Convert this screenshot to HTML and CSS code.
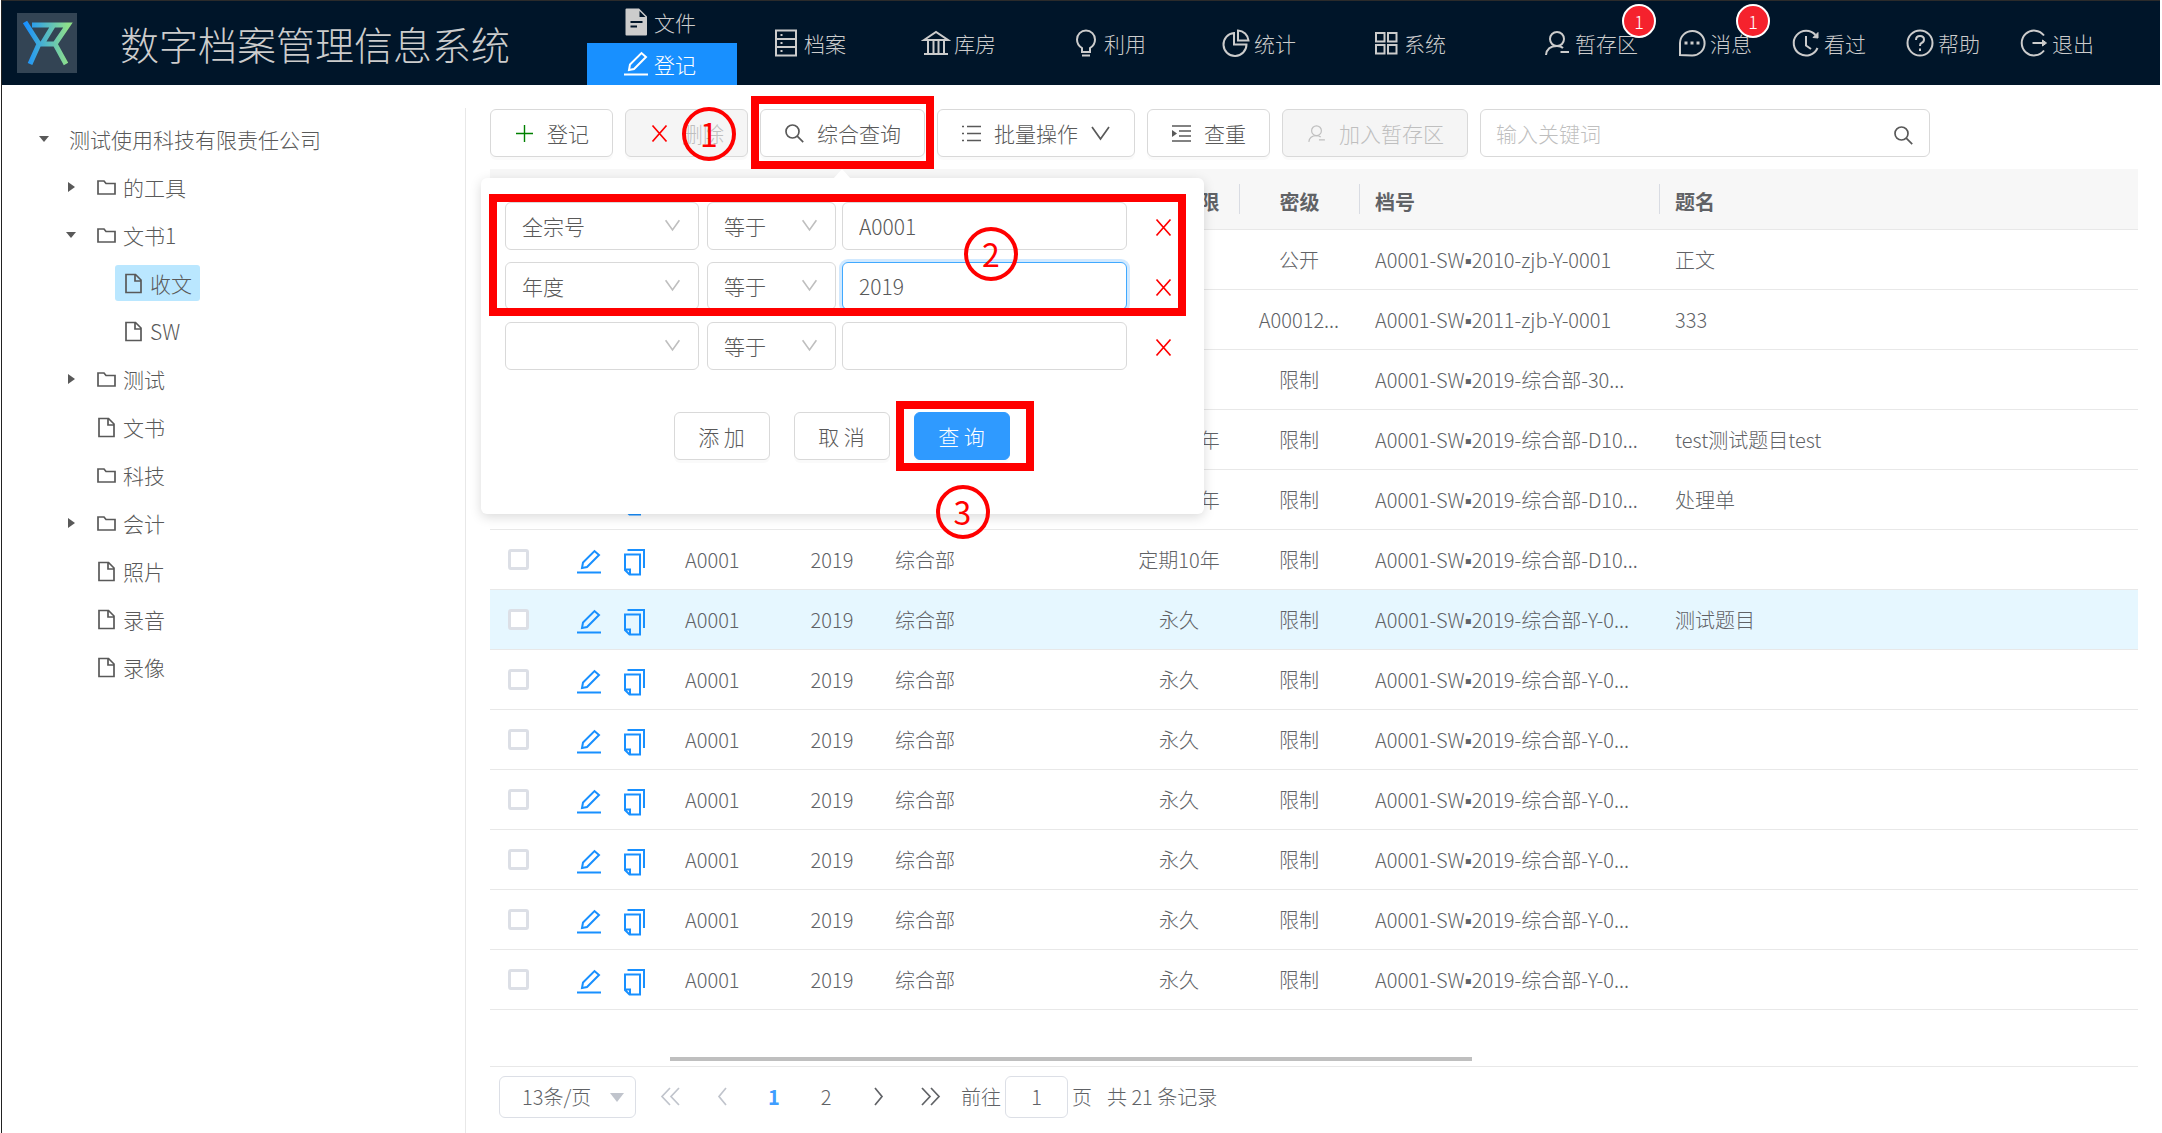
FILE: index.html
```html
<!DOCTYPE html>
<html lang="zh-CN">
<head>
<meta charset="utf-8">
<title>数字档案管理信息系统</title>
<link rel="stylesheet" href="styles.css">
</head>
<body>
<svg class="sprite" aria-hidden="true">
  <defs>
    <linearGradient id="brand" x1="0" y1="0" x2="1" y2="0"><stop offset="0" stop-color="#1890ff"/><stop offset="1" stop-color="#8fe08a"/></linearGradient>
  </defs>
  <symbol id="i-file-fill" viewBox="0 0 30 30"><path fill="currentColor" stroke="none" fill-rule="evenodd" d="M4.500 2.500q0-1 1-1H18L26 9.500v18q0 1-1 1H5.500q-1 0-1-1zM18.500 4v6H24.500zM9.500 14v2h12v-2zm0 4.500v2h6.500v-2z"/></symbol>
  <symbol id="i-edit" viewBox="0 0 30 30"><path d="M8 21l1-5.500L20.500 4 25 8 13 20zM3 25.500h24"/></symbol>
  <symbol id="i-database" viewBox="0 0 30 30"><path d="M5 2.500h20v25H5zM5 11h20M5 19h20"/><path d="M9.500 7h2M9.500 15h2M9.500 23h2"/></symbol>
  <symbol id="i-bank" viewBox="0 0 30 30"><path d="M3 12L15 4l12 8zM7 12v13M12.500 12v13M17.500 12v13M23 12v13M3 26h24"/></symbol>
  <symbol id="i-bulb" viewBox="0 0 30 30"><path d="M11 24v-4q-5-3-5-8.500a9 9 0 0 1 18 0Q24 17 19 20v4zM11 27.500h8"/></symbol>
  <symbol id="i-pie" viewBox="0 0 30 30"><path d="M13 5a11.500 11.500 0 1 0 12.500 11.500H13zM17 2.500V12.500h10.500A11 11 0 0 0 17 2.500z"/></symbol>
  <symbol id="i-app" viewBox="0 0 30 30"><path d="M5 5h8.500v8.500H5zM17 5h8.500v8.500H17zM5 17h8.500v8.500H5zM17 17h8.500v8.500H17z"/></symbol>
  <symbol id="i-user" viewBox="0 0 30 30"><circle cx="15" cy="11" r="7"/><path d="M4 27q1-9 11-9 4 0 6 2M18.500 24H27"/></symbol>
  <symbol id="i-message" viewBox="0 0 30 30"><path d="M3 27V15A12.300 12.300 0 1 1 15 27.500z"/><path stroke-width="3" d="M7.500 15h3M13.500 15h3M19.500 15h3"/></symbol>
  <symbol id="i-history" viewBox="0 0 30 30"><path d="M24.500 7A12.400 12.400 0 1 0 26.500 20M15 8v9.500l5 3.500"/><path fill="currentColor" stroke-width="1" d="M27 4.500v5.500l-5-.5z"/></symbol>
  <symbol id="i-question" viewBox="0 0 30 30"><circle cx="15" cy="15" r="12.500"/><path d="M11 12q0-4 4-4t4 3.500Q19 14 16.500 15 15 15.500 15 18M15 20.500v2.500"/></symbol>
  <symbol id="i-logout" viewBox="0 0 30 30"><path d="M25 7.500A12.400 12.400 0 1 0 25 22.500M13.500 15H24"/><path fill="currentColor" stroke-width="1" d="M23.500 12v6l4-3z"/></symbol>
  <symbol id="i-copy" viewBox="0 0 30 30"><path d="M6 7.500h15v20H10.500L6 23zM6 22.500h5v5M8.500 3H25v18"/></symbol>
  <symbol id="i-folder" viewBox="0 0 21 21"><path d="M2 4h6l2 2.500h9V17H2z"/></symbol>
  <symbol id="i-file" viewBox="0 0 21 21"><path d="M3 1.500h9.500L18 7v12.500H3zM12 2v6h6"/></symbol>
  <symbol id="i-plus" viewBox="0 0 21 21"><path stroke-width="1.400" d="M10.500 2v17M2 10.500h17"/></symbol>
  <symbol id="i-close" viewBox="0 0 21 21"><path d="M3.500 2.500l14 16M17.500 2.500l-14 16"/></symbol>
  <symbol id="i-search" viewBox="0 0 21 21"><circle cx="8.500" cy="8.500" r="6.500"/><path d="M13.200 13.200l6 6"/></symbol>
  <symbol id="i-list" viewBox="0 0 21 21"><path d="M6 3.500h14M6 10.500h14M6 17.500h14M1 3.500h2M1 10.500h2M1 17.500h2"/></symbol>
  <symbol id="i-unfold" viewBox="0 0 21 21"><path d="M1 3h19M8 8h12M8 13h12M1 18h19"/><path fill="currentColor" stroke="none" d="M1 7l5 3.500L1 14z"/></symbol>
  <symbol id="i-down" viewBox="0 0 21 21"><path d="M2 4l8.500 12L19 4"/></symbol>
  <symbol id="i-left" viewBox="0 0 21 21"><path d="M14 2l-7 8.500 7 8.500"/></symbol>
  <symbol id="i-right" viewBox="0 0 21 21"><path d="M7 2l7 8.500L7 19"/></symbol>
  <symbol id="i-dleft" viewBox="0 0 21 21"><path d="M10 2l-8 8.500 8 8.500M19 2l-8 8.500 8 8.500"/></symbol>
  <symbol id="i-dright" viewBox="0 0 21 21"><path d="M2 2l8 8.500L2 19M11 2l8 8.500-8 8.500"/></symbol>
</svg>

<div class="app">
  <header class="topbar">
    <svg class="logo" viewBox="0 0 60 60" aria-label="logo"><path fill="none" stroke="url(#brand)" stroke-width="5" d="M8 9l14 22-9 20M15 12h36L38 31l11 20M36 13L25 31M20 31h19"/></svg>
    <h1 class="title">数字档案管理信息系统</h1>
    <nav class="menu">
      <div class="menu-stack">
        <a href="#" class="menu-item"><svg class="icon30"><use href="#i-file-fill"/></svg>文件</a>
        <a href="#" class="menu-item active"><svg class="icon30"><use href="#i-edit"/></svg>登记</a>
      </div>
      <a href="#" class="menu-item"><svg class="icon30"><use href="#i-database"/></svg>档案</a>
      <a href="#" class="menu-item"><svg class="icon30"><use href="#i-bank"/></svg>库房</a>
      <a href="#" class="menu-item"><svg class="icon30"><use href="#i-bulb"/></svg>利用</a>
      <a href="#" class="menu-item"><svg class="icon30"><use href="#i-pie"/></svg>统计</a>
      <a href="#" class="menu-item"><svg class="icon30"><use href="#i-app"/></svg>系统</a>
    </nav>
    <nav class="tools">
      <a href="#" class="tool"><svg class="icon30"><use href="#i-user"/></svg>暂存区<span class="badge">1</span></a>
      <a href="#" class="tool"><svg class="icon30"><use href="#i-message"/></svg>消息<span class="badge">1</span></a>
      <a href="#" class="tool"><svg class="icon30"><use href="#i-history"/></svg>看过</a>
      <a href="#" class="tool"><svg class="icon30"><use href="#i-question"/></svg>帮助</a>
      <a href="#" class="tool"><svg class="icon30"><use href="#i-logout"/></svg>退出</a>
    </nav>
  </header>

  <div class="body">
    <aside class="sidebar">
      <ul class="tree">
        <li><span class="node"><i class="caret open"></i><span class="label">测试使用科技有限责任公司</span></span>
          <ul>
            <li><span class="node"><i class="caret"></i><span class="label"><svg class="icon21"><use href="#i-folder"/></svg>的工具</span></span></li>
            <li><span class="node"><i class="caret open"></i><span class="label"><svg class="icon21"><use href="#i-folder"/></svg>文书1</span></span>
              <ul>
                <li><span class="node"><i class="caret none"></i><span class="label selected"><svg class="icon21"><use href="#i-file"/></svg>收文</span></span></li>
                <li><span class="node"><i class="caret none"></i><span class="label"><svg class="icon21"><use href="#i-file"/></svg>SW</span></span></li>
              </ul>
            </li>
            <li><span class="node"><i class="caret"></i><span class="label"><svg class="icon21"><use href="#i-folder"/></svg>测试</span></span></li>
            <li><span class="node"><i class="caret none"></i><span class="label"><svg class="icon21"><use href="#i-file"/></svg>文书</span></span></li>
            <li><span class="node"><i class="caret none"></i><span class="label"><svg class="icon21"><use href="#i-folder"/></svg>科技</span></span></li>
            <li><span class="node"><i class="caret"></i><span class="label"><svg class="icon21"><use href="#i-folder"/></svg>会计</span></span></li>
            <li><span class="node"><i class="caret none"></i><span class="label"><svg class="icon21"><use href="#i-file"/></svg>照片</span></span></li>
            <li><span class="node"><i class="caret none"></i><span class="label"><svg class="icon21"><use href="#i-file"/></svg>录音</span></span></li>
            <li><span class="node"><i class="caret none"></i><span class="label"><svg class="icon21"><use href="#i-file"/></svg>录像</span></span></li>
          </ul>
        </li>
      </ul>
    </aside>

    <main class="content">
      <div class="toolbar">
        <button class="btn"><svg class="icon21 green"><use href="#i-plus"/></svg>登记</button>
        <button class="btn" disabled><svg class="icon21 red"><use href="#i-close"/></svg>删除</button>
        <div class="query">
          <button class="btn"><svg class="icon21"><use href="#i-search"/></svg>综合查询</button>
          <span class="frame frame-button"></span>
          <span class="step step-one">1</span>
          <form class="popover">
            <div class="conditions">
              <div class="condition">
                <span class="select wide"><select aria-label="字段1"><option>全宗号</option></select><svg><use href="#i-down"/></svg></span>
                <span class="select narrow"><select aria-label="条件1"><option>等于</option></select><svg><use href="#i-down"/></svg></span>
                <input type="text" aria-label="值1" value="A0001">
                <button type="button" class="remove" aria-label="移除"><svg class="icon21"><use href="#i-close"/></svg></button>
              </div>
              <div class="condition">
                <span class="select wide"><select aria-label="字段2"><option>年度</option></select><svg><use href="#i-down"/></svg></span>
                <span class="select narrow"><select aria-label="条件2"><option>等于</option></select><svg><use href="#i-down"/></svg></span>
                <input type="text" class="focused" aria-label="值2" value="2019">
                <button type="button" class="remove" aria-label="移除"><svg class="icon21"><use href="#i-close"/></svg></button>
              </div>
              <div class="condition">
                <span class="select wide"><select aria-label="字段3"><option></option></select><svg><use href="#i-down"/></svg></span>
                <span class="select narrow"><select aria-label="条件3"><option>等于</option></select><svg><use href="#i-down"/></svg></span>
                <input type="text" aria-label="值3">
                <button type="button" class="remove" aria-label="移除"><svg class="icon21"><use href="#i-close"/></svg></button>
              </div>
              <span class="frame frame-conditions"></span>
              <span class="step step-two">2</span>
            </div>
            <div class="popover-actions">
              <button type="button" class="btn">添 加</button>
              <button type="button" class="btn">取 消</button>
              <span class="submit"><button type="button" class="btn primary">查 询</button><span class="frame frame-submit"></span><span class="step step-three">3</span></span>
            </div>
          </form>
        </div>
        <button class="btn"><svg class="icon21"><use href="#i-list"/></svg>批量操作<svg class="icon21"><use href="#i-down"/></svg></button>
        <button class="btn"><svg class="icon21"><use href="#i-unfold"/></svg>查重</button>
        <button class="btn" disabled><svg class="icon21"><use href="#i-user"/></svg>加入暂存区</button>
        <label class="search"><input type="text" placeholder="输入关键词" aria-label="输入关键词"><svg class="icon21"><use href="#i-search"/></svg></label>
      </div>

      <table class="records">
        <colgroup><col class="c-check"><col class="c-act"><col class="c-fonds"><col class="c-year"><col class="c-dept"><col class="c-term"><col class="c-level"><col class="c-code"><col></colgroup>
        <thead>
          <tr><th><input type="checkbox" aria-label="全选"></th><th></th><th><span>全宗号</span></th><th class="mid"><span>年度</span></th><th><span>部门</span></th><th class="mid"><span>保管期限</span></th><th class="mid"><span>密级</span></th><th><span>档号</span></th><th class="last"><span>题名</span></th></tr>
        </thead>
        <tbody>
          <tr><td><input type="checkbox" aria-label="选择"></td><td><div class="acts"><a href="#" aria-label="编辑"><svg class="icon30"><use href="#i-edit"/></svg></a><a href="#" aria-label="复制"><svg class="icon30"><use href="#i-copy"/></svg></a></div></td><td>A0001</td><td class="mid">2010</td><td>综合部</td><td class="mid">永久</td><td class="mid">公开</td><td>A0001-SW<span class="dot">▪</span>2010-zjb-Y-0001</td><td>正文</td></tr>
          <tr><td><input type="checkbox" aria-label="选择"></td><td><div class="acts"><a href="#" aria-label="编辑"><svg class="icon30"><use href="#i-edit"/></svg></a><a href="#" aria-label="复制"><svg class="icon30"><use href="#i-copy"/></svg></a></div></td><td>A0001</td><td class="mid">2011</td><td>综合部</td><td class="mid">永久</td><td class="mid">A00012...</td><td>A0001-SW<span class="dot">▪</span>2011-zjb-Y-0001</td><td>333</td></tr>
          <tr><td><input type="checkbox" aria-label="选择"></td><td><div class="acts"><a href="#" aria-label="编辑"><svg class="icon30"><use href="#i-edit"/></svg></a><a href="#" aria-label="复制"><svg class="icon30"><use href="#i-copy"/></svg></a></div></td><td>A0001</td><td class="mid">2019</td><td>综合部</td><td class="mid">永久</td><td class="mid">限制</td><td>A0001-SW<span class="dot">▪</span>2019-综合部-30...</td><td></td></tr>
          <tr><td><input type="checkbox" aria-label="选择"></td><td><div class="acts"><a href="#" aria-label="编辑"><svg class="icon30"><use href="#i-edit"/></svg></a><a href="#" aria-label="复制"><svg class="icon30"><use href="#i-copy"/></svg></a></div></td><td>A0001</td><td class="mid">2019</td><td>综合部</td><td class="mid">定期10年</td><td class="mid">限制</td><td>A0001-SW<span class="dot">▪</span>2019-综合部-D10...</td><td>test测试题目test</td></tr>
          <tr><td><input type="checkbox" aria-label="选择"></td><td><div class="acts"><a href="#" aria-label="编辑"><svg class="icon30"><use href="#i-edit"/></svg></a><a href="#" aria-label="复制"><svg class="icon30"><use href="#i-copy"/></svg></a></div></td><td>A0001</td><td class="mid">2019</td><td>综合部</td><td class="mid">定期10年</td><td class="mid">限制</td><td>A0001-SW<span class="dot">▪</span>2019-综合部-D10...</td><td>处理单</td></tr>
          <tr><td><input type="checkbox" aria-label="选择"></td><td><div class="acts"><a href="#" aria-label="编辑"><svg class="icon30"><use href="#i-edit"/></svg></a><a href="#" aria-label="复制"><svg class="icon30"><use href="#i-copy"/></svg></a></div></td><td>A0001</td><td class="mid">2019</td><td>综合部</td><td class="mid">定期10年</td><td class="mid">限制</td><td>A0001-SW<span class="dot">▪</span>2019-综合部-D10...</td><td></td></tr>
          <tr class="current"><td><input type="checkbox" aria-label="选择"></td><td><div class="acts"><a href="#" aria-label="编辑"><svg class="icon30"><use href="#i-edit"/></svg></a><a href="#" aria-label="复制"><svg class="icon30"><use href="#i-copy"/></svg></a></div></td><td>A0001</td><td class="mid">2019</td><td>综合部</td><td class="mid">永久</td><td class="mid">限制</td><td>A0001-SW<span class="dot">▪</span>2019-综合部-Y-0...</td><td>测试题目</td></tr>
          <tr><td><input type="checkbox" aria-label="选择"></td><td><div class="acts"><a href="#" aria-label="编辑"><svg class="icon30"><use href="#i-edit"/></svg></a><a href="#" aria-label="复制"><svg class="icon30"><use href="#i-copy"/></svg></a></div></td><td>A0001</td><td class="mid">2019</td><td>综合部</td><td class="mid">永久</td><td class="mid">限制</td><td>A0001-SW<span class="dot">▪</span>2019-综合部-Y-0...</td><td></td></tr>
          <tr><td><input type="checkbox" aria-label="选择"></td><td><div class="acts"><a href="#" aria-label="编辑"><svg class="icon30"><use href="#i-edit"/></svg></a><a href="#" aria-label="复制"><svg class="icon30"><use href="#i-copy"/></svg></a></div></td><td>A0001</td><td class="mid">2019</td><td>综合部</td><td class="mid">永久</td><td class="mid">限制</td><td>A0001-SW<span class="dot">▪</span>2019-综合部-Y-0...</td><td></td></tr>
          <tr><td><input type="checkbox" aria-label="选择"></td><td><div class="acts"><a href="#" aria-label="编辑"><svg class="icon30"><use href="#i-edit"/></svg></a><a href="#" aria-label="复制"><svg class="icon30"><use href="#i-copy"/></svg></a></div></td><td>A0001</td><td class="mid">2019</td><td>综合部</td><td class="mid">永久</td><td class="mid">限制</td><td>A0001-SW<span class="dot">▪</span>2019-综合部-Y-0...</td><td></td></tr>
          <tr><td><input type="checkbox" aria-label="选择"></td><td><div class="acts"><a href="#" aria-label="编辑"><svg class="icon30"><use href="#i-edit"/></svg></a><a href="#" aria-label="复制"><svg class="icon30"><use href="#i-copy"/></svg></a></div></td><td>A0001</td><td class="mid">2019</td><td>综合部</td><td class="mid">永久</td><td class="mid">限制</td><td>A0001-SW<span class="dot">▪</span>2019-综合部-Y-0...</td><td></td></tr>
          <tr><td><input type="checkbox" aria-label="选择"></td><td><div class="acts"><a href="#" aria-label="编辑"><svg class="icon30"><use href="#i-edit"/></svg></a><a href="#" aria-label="复制"><svg class="icon30"><use href="#i-copy"/></svg></a></div></td><td>A0001</td><td class="mid">2019</td><td>综合部</td><td class="mid">永久</td><td class="mid">限制</td><td>A0001-SW<span class="dot">▪</span>2019-综合部-Y-0...</td><td></td></tr>
          <tr><td><input type="checkbox" aria-label="选择"></td><td><div class="acts"><a href="#" aria-label="编辑"><svg class="icon30"><use href="#i-edit"/></svg></a><a href="#" aria-label="复制"><svg class="icon30"><use href="#i-copy"/></svg></a></div></td><td>A0001</td><td class="mid">2019</td><td>综合部</td><td class="mid">永久</td><td class="mid">限制</td><td>A0001-SW<span class="dot">▪</span>2019-综合部-Y-0...</td><td></td></tr>
        </tbody>
      </table>
      <div class="scroll-track"><div class="scroll-thumb"></div></div>

      <div class="pager">
        <span class="page-size"><select aria-label="每页条数"><option>13条/页</option></select><i class="triangle"></i></span>
        <button class="page" disabled aria-label="首页"><svg class="icon21"><use href="#i-dleft"/></svg></button>
        <button class="page" disabled aria-label="上一页"><svg class="icon21"><use href="#i-left"/></svg></button>
        <button class="page on">1</button>
        <button class="page">2</button>
        <button class="page" aria-label="下一页"><svg class="icon21"><use href="#i-right"/></svg></button>
        <button class="page" aria-label="末页"><svg class="icon21"><use href="#i-dright"/></svg></button>
        <label class="jump">前往<input type="text" value="1">页</label>
        <span>共 21 条记录</span>
      </div>
    </main>
  </div>
</div>
</body>
</html>
```

FILE: styles.css
```css
* { box-sizing: border-box; }

body {
  margin: 0;
  background: #fff;
  color: #606266;
  font: 300 21px/30px "Noto Sans CJK SC", "Noto Sans", sans-serif;
}

a { color: inherit; text-decoration: none; }
button, input, select { font: inherit; color: inherit; margin: 0; outline: 0; }
button { cursor: pointer; }
ul { list-style: none; margin: 0; padding: 0; }

svg { flex: none; fill: none; stroke: currentColor; stroke-width: 2; }
.sprite { position: absolute; width: 0; height: 0; }
.icon30 { width: 30px; height: 30px; }
.icon21 { width: 21px; height: 21px; stroke-width: 1.7; }
.green { color: #008000; }
.red { color: #f00; }

.app {
  display: flex;
  flex-direction: column;
  min-height: 100vh;
  margin: 0 2px 0 1px;
  border-top: 1px solid #2b2b2b;
  border-left: 1px solid #222;
}

/* top bar */
.topbar {
  display: flex;
  align-items: center;
  height: 84px;
  padding-right: 66px;
  background: #001529;
  color: #ccc;
}
.logo { width: 60px; height: 60px; margin-left: 15px; background: #334454; }
.title {
  flex: none;
  width: 510px;
  margin: 0;
  padding-left: 43px;
  font-size: 39px;
  line-height: 60px;
  font-weight: 300;
  white-space: nowrap;
}
.menu { display: flex; align-self: stretch; }
.menu-stack { display: flex; flex-direction: column; }
.menu-item {
  display: flex;
  flex: 1;
  align-items: center;
  gap: 3px;
  min-width: 150px;
  padding-left: 34px;
  white-space: nowrap;
}
.menu-item.active { background: #1890ff; color: #fff; }
.tools { display: flex; gap: 39px; margin-left: auto; }
.tool { position: relative; display: flex; align-items: center; gap: 3px; white-space: nowrap; }
.badge {
  position: absolute;
  top: -24px;
  right: -18px;
  width: 34px;
  height: 34px;
  border: 2px solid #fff;
  border-radius: 17px;
  background: #f5222d;
  color: #fff;
  font-size: 18px;
  text-align: center;
}

/* layout */
.body { display: flex; flex: 1; }
.sidebar {
  width: 464px;
  flex: none;
  margin-top: 23px;
  padding: 7px 0 0 27px;
  border-right: 1px solid #e8e8e8;
}
.content { flex: 1; min-width: 0; padding: 24px 22px 0 24px; }

/* tree */
.tree { color: #595959; }
.tree ul { padding-left: 27px; }
.node { display: flex; align-items: center; gap: 2px; height: 48px; }
.caret { width: 30px; display: flex; justify-content: center; }
.caret::before { content: ""; border: solid transparent; border-width: 5px 0 5px 7px; border-left-color: currentColor; }
.caret.open::before { border-width: 6px 5px 0; border-color: currentColor transparent transparent; }
.caret.none::before { display: none; }
.label { display: flex; align-items: center; gap: 6px; height: 36px; padding: 0 8px; border-radius: 3px; }
.selected { background: #bae7ff; }

/* toolbar */
.toolbar { display: flex; gap: 12px; color: #595959; }
.btn {
  display: flex;
  align-items: center;
  gap: 12px;
  height: 48px;
  padding: 0 23px;
  border: 1px solid #d9d9d9;
  border-radius: 6px;
  background: #fff;
  box-shadow: 0 3px 0 rgba(0, 0, 0, .02);
  white-space: nowrap;
}
.btn:disabled { background: #f5f5f5; color: #bfbfbf; }
.btn.primary { background: #2f9aff; border-color: #2f9aff; color: #fff; }
.search { position: relative; flex: 0 1 450px; color: #595959; }
.search input {
  width: 100%;
  height: 48px;
  padding: 0 48px 0 15px;
  border: 1px solid #d9d9d9;
  border-radius: 6px;
}
.search input::placeholder { color: #bfbfbf; opacity: 1; }
.search svg { position: absolute; top: 16px; right: 16px; }

/* combined query panel */
.query { position: relative; }
.popover {
  position: absolute;
  z-index: 2;
  top: 69px;
  left: -279px;
  width: 723px;
  padding: 24px 24px 54px;
  border-radius: 6px;
  background: #fff;
  box-shadow: 0 3px 12px rgba(0, 0, 0, .15);
}
.popover::before {
  content: "";
  position: absolute;
  top: -9px;
  left: 352px;
  border: solid transparent;
  border-width: 0 9px 10px;
  border-bottom-color: #fff;
}
.conditions { position: relative; display: flex; flex-direction: column; gap: 12px; }
.condition { display: flex; align-items: center; }
.select { position: relative; }
.wide { width: 194px; }
.narrow { width: 129px; margin: 0 6px 0 8px; }
.select select, .condition input {
  width: 100%;
  height: 48px;
  padding: 0 16px;
  border: 1px solid #d9d9d9;
  border-radius: 6px;
  background: #fff;
  appearance: none;
}
.select svg { position: absolute; top: 15px; right: 18px; width: 17px; height: 17px; color: #bfbfbf; }
.condition input { width: 285px; }
.condition input.focused { border-color: #40a9ff; box-shadow: 0 0 0 3px rgba(24, 144, 255, .2); }
.remove { display: flex; margin-left: 26px; padding: 3px 0 0; border: 0; background: none; color: #f00; }
.popover-actions { display: flex; justify-content: center; gap: 24px; margin: 42px 2px 0 0; }
.submit { position: relative; }
.popover-actions .btn { width: 96px; justify-content: center; padding: 0; }

/* numbered guide marks */
.frame { position: absolute; z-index: 3; border: 8px solid #f00; pointer-events: none; }
.frame-button { inset: -13px -9px -12px; }
.frame-conditions { top: -8px; left: -16px; right: -6px; height: 122px; }
.frame-submit { inset: -11px -24px -11px -18px; }
.step {
  position: absolute;
  z-index: 4;
  width: 54px;
  height: 54px;
  border: 4px solid #f00;
  border-radius: 27px;
  color: #f00;
  font-size: 32px;
  font-weight: 400;
  line-height: 44px;
  text-align: center;
}
.step-one { top: -2px; left: -78px; }
.step-two { top: 25px; left: 459px; }
.step-three { top: 73px; left: 22px; }

/* records */
.records { width: 100%; margin-top: 12px; border-collapse: collapse; table-layout: fixed; font-size: 20px; }
.c-check { width: 60px; }
.c-act { width: 120px; }
.c-fonds { width: 116px; }
.c-year { width: 94px; }
.c-dept { width: 240px; }
.c-term, .c-level { width: 120px; }
.c-code { width: 300px; }
.records th, .records td {
  height: 60px;
  padding: 2px 0 0 15px;
  border-bottom: 1px solid #e8e8e8;
  text-align: left;
  white-space: nowrap;
}
.records th { padding: 0; background: #f7f7f7; font-weight: 700; }
.records th span { display: block; height: 30px; padding-left: 15px; border-right: 1px solid #d9dce3; line-height: 36px; }
.records .last span { border: 0; }
.records .mid, .records .mid span { padding-left: 0; text-align: center; }
.records td.mid { padding-right: 2px; }
.records .current { background: #e6f7ff; }
.records input {
  display: block;
  width: 21px;
  height: 21px;
  margin: -2px 0 0 3px;
  border: 3px solid #dcdfe6;
  border-radius: 3px;
  background: #fff;
  appearance: none;
}
.dot { font-family: "Liberation Sans", sans-serif; line-height: 1; }
.acts { display: flex; gap: 15px; padding: 4px 0 0 9px; color: #1890ff; }
.acts a { display: flex; }
.scroll-track { padding: 47px 0 5px 180px; border-bottom: 1px solid #e8e8e8; }
.scroll-thumb { width: 802px; height: 4px; background: #bfbfbf; }

/* pager */
.pager { display: flex; align-items: center; padding: 9px; font-size: 20px; }
.page-size { position: relative; margin-right: 8px; }
.page-size select {
  width: 137px;
  height: 42px;
  padding: 0 22px;
  border: 1px solid #dcdfe6;
  border-radius: 6px;
  background: #fff;
  appearance: none;
}
.triangle { position: absolute; top: 17px; right: 12px; border: solid transparent; border-width: 9px 7px 0; border-top-color: #c0c4cc; }
.page { display: flex; justify-content: center; width: 52px; padding: 0; border: 0; background: none; }
.page:disabled { color: #c0c4cc; }
.page.on { color: #409eff; font-weight: 700; }
.jump { display: flex; align-items: center; gap: 4px; margin: 0 15px 0 5px; }
.jump input { width: 63px; height: 42px; padding: 0; border: 1px solid #dcdfe6; border-radius: 6px; text-align: center; }
```
